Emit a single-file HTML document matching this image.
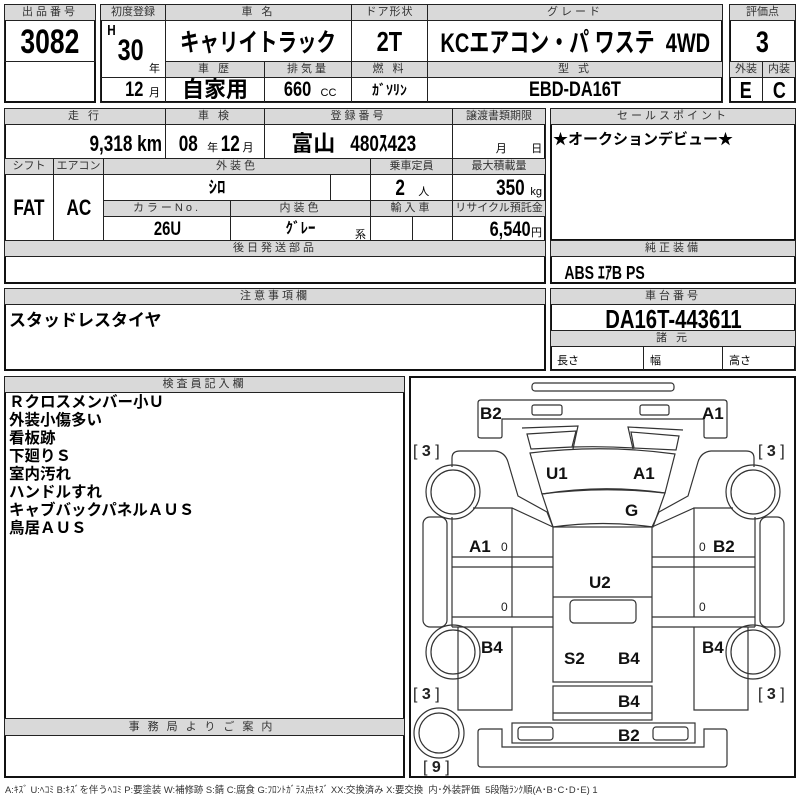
<!DOCTYPE html>
<html><head><meta charset="utf-8">
<style>
*{margin:0;padding:0;box-sizing:border-box}
body{width:800px;height:800px;background:#fff;position:relative;overflow:hidden;font-family:"Liberation Sans","Noto Sans CJK JP",sans-serif;color:#000}
.c{position:absolute;border:1px solid #222;overflow:hidden;white-space:nowrap}
.h{background:#d9d9d9;color:#333;font-size:11px;text-align:center;line-height:14px;letter-spacing:3px}
.o{position:absolute;border:2px solid #111}
.v{font-weight:bold;text-align:center}
.n{display:inline-block;transform:scaleX(.78);transform-origin:center}
.w{margin:0 -80px}
.nr{display:inline-block;transform:scaleX(.78);transform-origin:right}
.t{position:absolute;white-space:nowrap}
.s{font-size:11px;font-weight:normal}
</style></head><body>

<div class="o" style="left:4px;top:4px;width:92px;height:99px"></div>
<div class="c h" style="left:4px;top:4px;width:92px;height:17px">出品番号</div>
<div class="c v" style="left:4px;top:20px;width:92px;height:42px;font-size:34px;line-height:42px"><span class="n">3082</span></div>

<div class="o" style="left:100px;top:4px;width:623px;height:99px"></div>
<div class="c h" style="left:100px;top:4px;width:66px;height:17px;letter-spacing:0">初度登録</div>
<div class="c h" style="left:165px;top:4px;width:187px;height:17px">車 名</div>
<div class="c h" style="left:351px;top:4px;width:77px;height:17px;letter-spacing:1px">ドア形状</div>
<div class="c h" style="left:427px;top:4px;width:296px;height:17px">グレード</div>
<div class="c" style="left:100px;top:20px;width:66px;height:58px"></div>
<div class="t v" style="left:106px;top:22px;font-size:15px"><span class="n">H</span></div>
<div class="t v" style="left:114px;top:34px;font-size:30px"><span class="n">30</span></div>
<div class="t" style="left:149px;top:60px;font-size:11px">年</div>
<div class="c v" style="left:165px;top:20px;width:187px;height:42px;font-size:25px;line-height:44px"><span class="n w">キャリイトラック</span></div>
<div class="c v" style="left:351px;top:20px;width:77px;height:42px;font-size:28px;line-height:42px"><span class="n">2T</span></div>
<div class="c v" style="left:427px;top:20px;width:296px;height:42px;font-size:27px;line-height:44px"><span class="n w" style="transform:scaleX(.74)">KCエアコン・パ ワステ &nbsp;4WD</span></div>
<div class="c h" style="left:165px;top:61px;width:100px;height:17px">車 歴</div>
<div class="c h" style="left:264px;top:61px;width:88px;height:17px">排気量</div>
<div class="c h" style="left:351px;top:61px;width:77px;height:17px">燃 料</div>
<div class="c h" style="left:427px;top:61px;width:296px;height:17px">型 式</div>
<div class="c v" style="left:100px;top:77px;width:66px;height:26px;font-size:21px;line-height:24px;text-align:right;padding-right:5px"><span class="nr">12</span> <span class="s">月</span></div>
<div class="c v" style="left:165px;top:77px;width:100px;height:26px;font-size:22px;line-height:24px">自家用</div>
<div class="c v" style="left:264px;top:77px;width:88px;height:26px;font-size:21px;line-height:24px"><span class="n">660</span> <span class="s">CC</span></div>
<div class="c v" style="left:351px;top:77px;width:77px;height:26px;font-size:14px;line-height:24px">ｶﾞｿﾘﾝ</div>
<div class="c v" style="left:427px;top:77px;width:296px;height:26px;font-size:21px;line-height:24px"><span class="n">EBD-DA16T</span></div>

<div class="o" style="left:729px;top:4px;width:67px;height:99px"></div>
<div class="c h" style="left:729px;top:4px;width:67px;height:17px;letter-spacing:0">評価点</div>
<div class="c v" style="left:729px;top:20px;width:67px;height:42px;font-size:30px;line-height:44px"><span class="n">3</span></div>
<div class="c h" style="left:729px;top:61px;width:34px;height:17px;letter-spacing:0">外装</div>
<div class="c h" style="left:762px;top:61px;width:34px;height:17px;letter-spacing:0">内装</div>
<div class="c v" style="left:729px;top:77px;width:34px;height:26px;font-size:23px;line-height:24px"><span class="n">E</span></div>
<div class="c v" style="left:762px;top:77px;width:34px;height:26px;font-size:23px;line-height:24px"><span class="n">C</span></div>

<div class="o" style="left:4px;top:108px;width:542px;height:176px"></div>
<div class="c h" style="left:4px;top:108px;width:162px;height:17px">走 行</div>
<div class="c h" style="left:165px;top:108px;width:100px;height:17px">車 検</div>
<div class="c h" style="left:264px;top:108px;width:189px;height:17px">登録番号</div>
<div class="c h" style="left:452px;top:108px;width:94px;height:17px;letter-spacing:0">譲渡書類期限</div>
<div class="c v" style="left:4px;top:124px;width:162px;height:35px;font-size:22px;line-height:38px;text-align:right;padding-right:3px"><span class="nr">9,318 km</span></div>
<div class="c v" style="left:165px;top:124px;width:100px;height:35px;font-size:22px;line-height:38px"><span class="n">08</span> <span class="s">年</span><span class="n">12</span><span class="s">月</span></div>
<div class="c v" style="left:264px;top:124px;width:189px;height:35px;font-size:22px;line-height:38px">富山 <span class="n">480ｽ423</span></div>
<div class="c" style="left:452px;top:124px;width:94px;height:35px;font-size:11px;line-height:48px">&nbsp;&nbsp;&nbsp;&nbsp;&nbsp;&nbsp;&nbsp;&nbsp;&nbsp;&nbsp;&nbsp;&nbsp;&nbsp;&nbsp;月&nbsp;&nbsp;&nbsp;&nbsp;&nbsp;&nbsp;&nbsp;&nbsp;日</div>
<div class="c h" style="left:4px;top:158px;width:50px;height:17px;letter-spacing:0">シフト</div>
<div class="c h" style="left:53px;top:158px;width:51px;height:17px;letter-spacing:0">エアコン</div>
<div class="c h" style="left:103px;top:158px;width:268px;height:17px">外装色</div>
<div class="c h" style="left:370px;top:158px;width:83px;height:17px;letter-spacing:0">乗車定員</div>
<div class="c h" style="left:452px;top:158px;width:94px;height:17px;letter-spacing:0">最大積載量</div>
<div class="c v" style="left:4px;top:174px;width:50px;height:67px;font-size:22px;line-height:66px"><span class="n">FAT</span></div>
<div class="c v" style="left:53px;top:174px;width:51px;height:67px;font-size:22px;line-height:66px"><span class="n">AC</span></div>
<div class="c v" style="left:103px;top:174px;width:228px;height:27px;font-size:17px;line-height:25px">ｼﾛ</div>
<div class="c" style="left:330px;top:174px;width:41px;height:27px"></div>
<div class="c v" style="left:370px;top:174px;width:83px;height:27px;font-size:22px;line-height:25px"><span class="n">2</span> &nbsp;<span class="s">人</span></div>
<div class="c v" style="left:452px;top:174px;width:94px;height:27px;font-size:22px;line-height:25px;text-align:right;padding-right:3px"><span class="nr">350</span> <span class="s">kg</span></div>
<div class="c h" style="left:103px;top:200px;width:128px;height:17px">カラーNo.</div>
<div class="c h" style="left:230px;top:200px;width:141px;height:17px">内装色</div>
<div class="c h" style="left:370px;top:200px;width:83px;height:17px">輸入車</div>
<div class="c h" style="left:452px;top:200px;width:94px;height:17px;letter-spacing:0">リサイクル預託金</div>
<div class="c v" style="left:103px;top:216px;width:128px;height:25px;font-size:19px;line-height:26px"><span class="n">26U</span></div>
<div class="c v" style="left:230px;top:216px;width:141px;height:25px;font-size:15px;line-height:24px">ｸﾞﾚｰ</div>
<div class="t" style="left:355px;top:226px;font-size:11px">系</div>
<div class="c" style="left:370px;top:216px;width:43px;height:25px"></div>
<div class="c" style="left:412px;top:216px;width:41px;height:25px"></div>
<div class="c v" style="left:452px;top:216px;width:94px;height:25px;font-size:21px;line-height:25px;text-align:right;padding-right:3px"><span class="nr">6,540</span><span class="s">円</span></div>
<div class="c h" style="left:4px;top:240px;width:542px;height:17px">後日発送部品</div>

<div class="o" style="left:550px;top:108px;width:246px;height:133px"></div>
<div class="c h" style="left:550px;top:108px;width:246px;height:17px">セールスポイント</div>
<div class="t" style="left:553px;top:128px;font-size:15px;font-weight:bold">★オークションデビュー★</div>
<div class="o" style="left:550px;top:240px;width:246px;height:44px"></div>
<div class="c h" style="left:550px;top:240px;width:246px;height:17px">純正装備</div>
<div class="t v" style="left:553px;top:259px;font-size:18px"><span class="n">ABS ｴｱB PS</span></div>

<div class="o" style="left:4px;top:288px;width:542px;height:83px"></div>
<div class="c h" style="left:4px;top:288px;width:542px;height:17px">注意事項欄</div>
<div class="t" style="left:9px;top:306px;font-size:17px;font-weight:bold">スタッドレスタイヤ</div>
<div class="o" style="left:550px;top:288px;width:246px;height:83px"></div>
<div class="c h" style="left:550px;top:288px;width:246px;height:17px">車台番号</div>
<div class="c v" style="left:550px;top:304px;width:246px;height:27px;font-size:26px;line-height:28px"><span class="n">DA16T-443611</span></div>
<div class="c h" style="left:550px;top:330px;width:246px;height:17px">諸 元</div>
<div class="c" style="left:550px;top:346px;width:94px;height:25px;font-size:11px;line-height:28px;padding-left:6px">長さ</div>
<div class="c" style="left:643px;top:346px;width:80px;height:25px;font-size:11px;line-height:28px;padding-left:6px">幅</div>
<div class="c" style="left:722px;top:346px;width:74px;height:25px;font-size:11px;line-height:28px;padding-left:6px">高さ</div>

<div class="o" style="left:4px;top:376px;width:401px;height:402px"></div>
<div class="c h" style="left:4px;top:376px;width:401px;height:17px">検査員記入欄</div>
<div class="t" style="left:9px;top:394px;font-size:15.5px;font-weight:bold;line-height:18px">Ｒクロスメンバー小Ｕ<br>外装小傷多い<br>看板跡<br>下廻りＳ<br>室内汚れ<br>ハンドルすれ<br>キャブバックパネルＡＵＳ<br>鳥居ＡＵＳ</div>
<div class="c h" style="left:4px;top:718px;width:401px;height:18px;letter-spacing:8px;line-height:16px">事務局よりご案内</div>

<div class="o" style="left:409px;top:376px;width:387px;height:402px"></div>
<svg style="position:absolute;left:0;top:0" width="800" height="800" fill="none" stroke="#333" stroke-width="1.2">
<rect x="532" y="383" width="142" height="8" rx="3"/>
<path d="M481,400 H724 Q727,400 727,403 V436 Q727,438 725,438 H706 Q704,438 704,436 V419 H502 V436 Q502,438 500,438 H481 Q478,438 478,436 V403 Q478,400 481,400 Z"/>
<rect x="532" y="405" width="30" height="10" rx="2"/>
<rect x="640" y="405" width="29" height="10" rx="2"/>
<path d="M522,428 L578,426 L573,449 M683,430 L628,427 L633,449"/>
<path d="M527,434 L576,431 L572,447 L531,449 Z M679,436 L631,432 L634,448 L676,450 Z"/>
<path d="M572,447 Q603,446 634,448"/>
<path d="M530,453 Q603,444 675,454 L665,493 Q603,484 542,494 Z"/>
<path d="M542,494 Q603,486 665,493 L653,527 Q603,520 553,527 Z"/>
<rect x="553" y="527" width="99" height="155"/>
<path d="M553,597 H652"/>
<rect x="570" y="600" width="66" height="23" rx="4"/>
<rect x="553" y="686" width="99" height="34"/>
<path d="M553,713 H652"/>
<rect x="512" y="723" width="183" height="20"/>
<rect x="518" y="727" width="35" height="13" rx="3"/>
<rect x="653" y="727" width="35" height="13" rx="3"/>
<path d="M481,729 H502 V747 H704 V729 H724 Q727,729 727,732 V764 Q727,767 724,767 H481 Q478,767 478,764 V732 Q478,729 481,729 Z"/>
<path d="M452,467 V458 Q452,451 460,451 H495 Q505,452 508,462 L518,496 L547,512 L553,527"/>
<path d="M512,508 L553,527"/>
<path d="M473,508 H512 V567 M452,517 V627 M452,557 H553 M452,567 H553 M452,617 H553 M452,627 H553 M512,567 V617"/>
<path d="M458,627 V710 H512 V627"/>
<path d="M754,467 V458 Q754,451 746,451 H711 Q701,452 698,462 L688,496 L659,512 L652,527"/>
<path d="M694,508 L652,527"/>
<path d="M733,508 H694 V567 M755,517 V627 M755,557 H652 M755,567 H652 M755,617 H652 M755,627 H652 M694,567 V617"/>
<path d="M748,627 V710 H694 V627"/>
<circle cx="453" cy="492" r="27"/><circle cx="453" cy="492" r="22"/>
<circle cx="453" cy="652" r="27"/><circle cx="453" cy="652" r="22"/>
<circle cx="753" cy="492" r="27"/><circle cx="753" cy="492" r="22"/>
<circle cx="753" cy="652" r="27"/><circle cx="753" cy="652" r="22"/>
<circle cx="439" cy="733" r="25"/><circle cx="439" cy="733" r="20"/>
<rect x="423" y="517" width="24" height="110" rx="7"/>
<rect x="760" y="517" width="24" height="110" rx="7"/>
<g fill="#111" stroke="none" font-family="Liberation Sans,sans-serif" font-weight="bold" font-size="17">
<text x="480" y="419">B2</text><text x="702" y="419">A1</text>
<text x="546" y="479">U1</text><text x="633" y="479">A1</text>
<text x="625" y="516">G</text>
<text x="469" y="552">A1</text><text x="713" y="552">B2</text>
<text x="589" y="588">U2</text>
<text x="481" y="653">B4</text><text x="702" y="653">B4</text>
<text x="564" y="664">S2</text><text x="618" y="664">B4</text>
<text x="618" y="707">B4</text><text x="618" y="741">B2</text>
</g>
<g fill="#222" stroke="none" font-family="Liberation Sans,sans-serif" font-size="12">
<text x="501" y="551">0</text><text x="699" y="551">0</text>
<text x="501" y="611">0</text><text x="699" y="611">0</text>
</g>
<g fill="#222" stroke="none" font-family="Liberation Sans,sans-serif" font-size="16">
<text x="413" y="456">[ <tspan font-weight="bold">3</tspan> ]</text>
<text x="758" y="456">[ <tspan font-weight="bold">3</tspan> ]</text>
<text x="413" y="699">[ <tspan font-weight="bold">3</tspan> ]</text>
<text x="758" y="699">[ <tspan font-weight="bold">3</tspan> ]</text>
<text x="423" y="772">[ <tspan font-weight="bold">9</tspan> ]</text>
</g>
</svg>

<div class="t" style="left:5px;top:782px;font-size:9.4px;color:#333">A:ｷｽﾞ U:ﾍｺﾐ B:ｷｽﾞを伴うﾍｺﾐ P:要塗装 W:補修跡 S:錆 C:腐食 G:ﾌﾛﾝﾄｶﾞﾗｽ点ｷｽﾞ XX:交換済み X:要交換 &nbsp;内･外装評価 &nbsp;5段階ﾗﾝｸ順(A･B･C･D･E) 1</div>
</body></html>
